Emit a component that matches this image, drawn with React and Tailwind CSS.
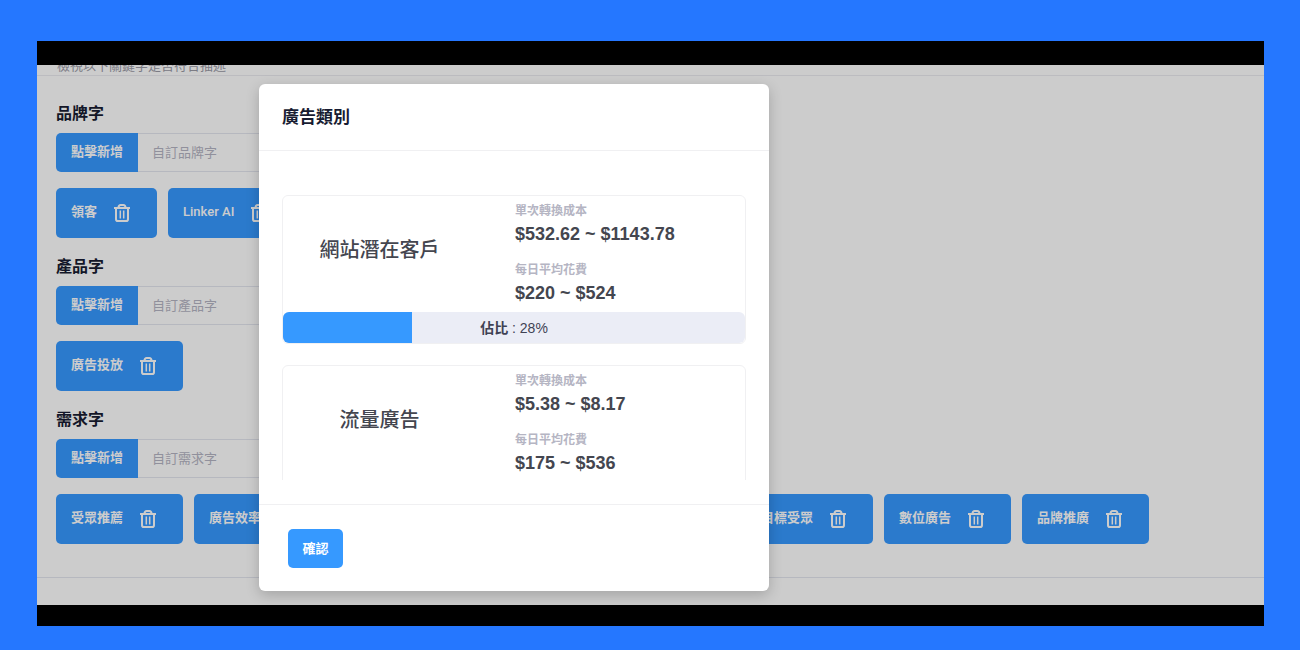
import React from "react";

const font = "font-['Liberation_Sans','Noto_Sans_CJK_TC',sans-serif]";

const sections = [
  { id: "brand", title: "品牌字", placeholder: "自訂品牌字", words: ["領客", "Linker AI"] },
  { id: "product", title: "產品字", placeholder: "自訂產品字", words: ["廣告投放"] },
  {
    id: "demand",
    title: "需求字",
    placeholder: "自訂需求字",
    words: ["受眾推薦", "廣告效率", "廣告優化", "廣告預算", "精準行銷", "目標受眾", "數位廣告", "品牌推廣"],
  },
];

const categories = [
  { name: "網站潛在客戶", cost: "$532.62 ~ $1143.78", daily: "$220 ~ $524", share: 28 },
  { name: "流量廣告", cost: "$5.38 ~ $8.17", daily: "$175 ~ $536", share: 72 },
];

function TrashIcon() {
  return (
    <svg viewBox="0 0 16 18" className="h-[18px] w-4" fill="none" stroke="currentColor" strokeWidth="2" aria-hidden="true">
      <path d="M0 4H16" />
      <path d="M4.4 3.8C4.6 1.8 5.2 1 6.6 1H9.4C10.8 1 11.4 1.8 11.6 3.8" />
      <path d="M2 4V15.2C2 16.5 2.6 17 3.8 17H12.2C13.4 17 14 16.5 14 15.2V4" />
      <path d="M6.3 6.4V14.6M9.7 6.4V14.6" strokeWidth="1.5" />
    </svg>
  );
}

function KeywordSection({ id, title, placeholder, words }) {
  return (
    <section className="flex flex-col pb-[17px]">
      <label htmlFor={id} className="text-base leading-6 font-bold text-[#181c32]">
        {title}
      </label>
      <div className="mt-[7px] flex h-[39px] w-[400px]">
        <button type="button" className="w-[82px] shrink-0 rounded-l-[5px] bg-[#3699ff] pb-0.5 text-[13px] font-bold text-white">
          點擊新增
        </button>
        <input
          id={id}
          type="text"
          placeholder={placeholder}
          className="min-w-0 grow rounded-r-[5px] border border-l-0 border-[#e4e6ef] px-3.5 text-[13px] placeholder:text-[#b5b5c3]"
        />
      </div>
      <ul className="mt-4 flex gap-[11px]">
        {words.map((word) => (
          <li key={word} className="flex h-[50px] shrink-0 items-center rounded-[5px] bg-[#3699ff] pr-[27px] pl-[15px] text-white">
            <span
              className={
                /^[\x20-\x7e]+$/.test(word)
                  ? "pb-0.5 font-[Roboto,sans-serif] text-[13px] font-medium"
                  : "pb-0.5 text-[13px] font-bold"
              }
            >
              {word}
            </span>
            <button type="button" aria-label={`刪除 ${word}`} className="ml-[17px]">
              <TrashIcon />
            </button>
          </li>
        ))}
      </ul>
    </section>
  );
}

function Metric({ label, value }) {
  return (
    <div>
      <dt className="text-xs leading-[18px] font-bold text-[#b5b5c3]">{label}</dt>
      <dd className="text-lg leading-7 font-bold text-[#44464f]">{value}</dd>
    </div>
  );
}

function CategoryCard({ name, cost, daily, share }) {
  return (
    <article className="rounded-md border border-[#f0f0f2]">
      <div className="grid grid-cols-2">
        <h3 className="flex items-center justify-center pr-[38px] pb-2 text-xl font-medium text-[#44464f]">{name}</h3>
        <dl className="flex flex-col gap-[13px] pt-1.5 pb-[5px] pl-px">
          <Metric label="單次轉換成本" value={cost} />
          <Metric label="每日平均花費" value={daily} />
        </dl>
      </div>
      <div className="grid h-[31px] overflow-hidden rounded-md bg-[#ebedf6]">
        <div className="col-start-1 row-start-1 bg-[#3699ff]" style={{ width: `${share}%` }} />
        <p className="col-start-1 row-start-1 self-center text-center text-sm text-[#3f4254]">
          <span className="font-bold">佔比</span> : {share}%
        </p>
      </div>
    </article>
  );
}

export default function App() {
  return (
    <div className={`flex min-h-screen flex-col bg-[#2577ff] pt-[41px] pr-9 pb-6 pl-[37px] ${font}`}>
      <div className="flex grow flex-col bg-black pt-6 pb-[21px]">
        <div className="relative grow overflow-hidden bg-white">
          <header className="-mt-2 border-b border-[#ececf0] px-5">
            <p className="text-[13px] leading-[18px] text-[#9a9aa6]">檢視以下關鍵字是否符合描述</p>
          </header>
          <main className="border-b border-[#e4e6ef] px-[19px] pt-[26px] pb-4">
            {sections.map((section) => (
              <KeywordSection key={section.id} {...section} />
            ))}
          </main>

          <div className="absolute inset-0 bg-black/20 pt-[19px] pl-[222px]">
            <div
              role="dialog"
              aria-modal="true"
              aria-labelledby="dialog-title"
              className="w-[510px] rounded-md bg-white shadow-[0_4px_14px_rgba(0,0,0,0.2)]"
            >
              <header className="border-b border-[#f0f0f2] px-[23px] pt-[21px] pb-[19px]">
                <h2 id="dialog-title" className="text-[17px] leading-[26px] font-bold text-[#181c32]">
                  廣告類別
                </h2>
              </header>
              <div className="px-[23px] pt-11 pb-6">
                <div className="flex h-[285px] flex-col gap-[21px] overflow-hidden">
                  {categories.map((category) => (
                    <CategoryCard key={category.name} {...category} />
                  ))}
                </div>
              </div>
              <footer className="border-t border-[#f0f0f2] px-[29px] pt-6 pb-[23px]">
                <button type="button" className="h-[39px] w-[55px] rounded-[5px] bg-[#3699ff] text-[13px] font-bold text-white">
                  確認
                </button>
              </footer>
            </div>
          </div>
        </div>
      </div>
    </div>
  );
}
